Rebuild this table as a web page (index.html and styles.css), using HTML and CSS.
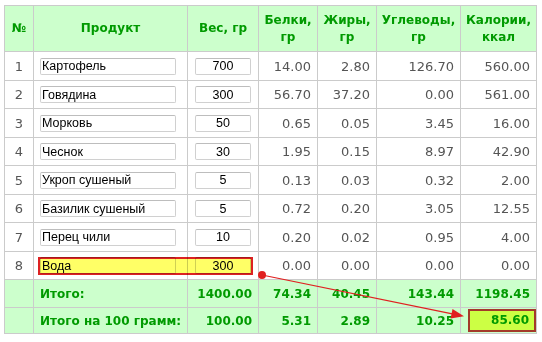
FILE: index.html
```html
<!DOCTYPE html>
<html>
<head>
<meta charset="utf-8">
<link rel="stylesheet" href="styles.css">
</head>
<body>
<div class="page">
<table class="calc">
<colgroup>
<col class="c-num"><col class="c-prod"><col class="c-w"><col class="c-b"><col class="c-f"><col class="c-u"><col class="c-k">
</colgroup>
<thead>
<tr class="head">
<th>№</th><th>Продукт</th><th>Вес, гр</th><th>Белки,<br>гр</th><th>Жиры,<br>гр</th><th>Углеводы,<br>гр</th><th>Калории,<br>ккал</th>
</tr>
</thead>
<tbody>
<tr class="row r29"><td class="idx">1</td><td><input class="name" value="Картофель"></td><td><input class="wt" value="700"></td><td class="n">14.00</td><td class="n">2.80</td><td class="n">126.70</td><td class="n">560.00</td></tr>
<tr class="row r28"><td class="idx">2</td><td><input class="name" value="Говядина"></td><td><input class="wt" value="300"></td><td class="n">56.70</td><td class="n">37.20</td><td class="n">0.00</td><td class="n">561.00</td></tr>
<tr class="row r29"><td class="idx">3</td><td><input class="name" value="Морковь"></td><td><input class="wt" value="50"></td><td class="n">0.65</td><td class="n">0.05</td><td class="n">3.45</td><td class="n">16.00</td></tr>
<tr class="row r28"><td class="idx">4</td><td><input class="name" value="Чеснок"></td><td><input class="wt" value="30"></td><td class="n">1.95</td><td class="n">0.15</td><td class="n">8.97</td><td class="n">42.90</td></tr>
<tr class="row r29"><td class="idx">5</td><td><input class="name" value="Укроп сушеный"></td><td><input class="wt" value="5"></td><td class="n">0.13</td><td class="n">0.03</td><td class="n">0.32</td><td class="n">2.00</td></tr>
<tr class="row r28"><td class="idx">6</td><td><input class="name" value="Базилик сушеный"></td><td><input class="wt" value="5"></td><td class="n">0.72</td><td class="n">0.20</td><td class="n">3.05</td><td class="n">12.55</td></tr>
<tr class="row r29"><td class="idx">7</td><td><input class="name" value="Перец чили"></td><td><input class="wt" value="10"></td><td class="n">0.20</td><td class="n">0.02</td><td class="n">0.95</td><td class="n">4.00</td></tr>
<tr class="row r28 hl"><td class="idx">8</td><td><input class="name" value="Вода"></td><td><input class="wt" value="300"></td><td class="n">0.00</td><td class="n">0.00</td><td class="n">0.00</td><td class="n">0.00</td></tr>
<tr class="total t1"><td></td><td class="lbl">Итого:</td><td class="n">1400.00</td><td class="n">74.34</td><td class="n">40.45</td><td class="n">143.44</td><td class="n">1198.45</td></tr>
<tr class="total t2"><td></td><td class="lbl">Итого на 100 грамм:</td><td class="n">100.00</td><td class="n">5.31</td><td class="n">2.89</td><td class="n">10.25</td><td class="n res-cell"><div class="result">85.60</div></td></tr>
</tbody>
</table>
<div class="mark"></div>
<svg class="arrow" width="542" height="342" viewBox="0 0 542 342">
<line x1="262" y1="275" x2="456" y2="314.6" stroke="#e02020" stroke-width="1.2"/>
<polygon points="464,316.3 452.5,309 450.6,318.6" fill="#e02020"/>
<circle cx="262" cy="275" r="4" fill="#e02020"/>
</svg>
</div>
</body>
</html>
```
FILE: styles.css
```css
html, body {
  margin: 0;
  padding: 0;
  background: #fff;
}
.page {
  position: relative;
  width: 542px;
  height: 342px;
  padding: 5px 0 0 4px;
  box-sizing: border-box;
  font-family: "DejaVu Sans", Verdana, sans-serif;
}
.calc {
  border-collapse: collapse;
  table-layout: fixed;
  width: 532px;
}
.c-num { width: 29px; }
.c-prod { width: 154px; }
.c-w { width: 71px; }
.c-b { width: 59px; }
.c-f { width: 59px; }
.c-u { width: 84px; }
.c-k { width: 76px; }
.calc th, .calc td {
  border: 1px solid #cbcbcb;
  padding: 0 6px;
  overflow: visible;
  white-space: nowrap;
}
.head th {
  background: #ccffcc;
  color: #009a00;
  font-weight: bold;
  font-size: 12px;
  line-height: 17px;
  height: 45px;
  padding: 0;
  text-align: center;
}
.row td {
  font-size: 13px;
  color: #555;
}
.r29 td { height: 28px; }
.r28 td { height: 27px; }
.idx { text-align: center; padding: 0; }
.n { text-align: right; padding-right: 6px; }
input {
  font-family: "Liberation Sans", Arial, sans-serif;
  font-size: 12.5px;
  color: #000;
  border: 1px solid #d0d0d0;
  border-top-color: #bdbdbd;
  border-radius: 2px;
  background: #fff;
  height: 17px;
  box-sizing: border-box;
  padding: 0 1px;
  margin: 0;
  display: block;
}
input.name { width: 136px; }
input.wt { width: 56px; margin-left: 1px; text-align: center; }
.total td {
  background: #ccffcc;
  color: #009a00;
  font-weight: bold;
  font-size: 12px;
}
.t1 td { height: 27px; }
.t2 td { height: 25px; }
.res-cell { padding: 0 !important; }
.result {
  margin-left: 7px;
  border: 2px solid #a33a2a;
  background: #ccff44;
  height: 19px;
  line-height: 19px;
  text-align: right;
  padding-right: 5px;
}
.mark {
  position: absolute;
  left: 38px;
  top: 257px;
  width: 215px;
  height: 18px;
  box-sizing: border-box;
  border: 2px solid #dd2222;
  background: #ffff66;
  mix-blend-mode: multiply;
}
.arrow {
  position: absolute;
  left: 0;
  top: 0;
  pointer-events: none;
}
```
